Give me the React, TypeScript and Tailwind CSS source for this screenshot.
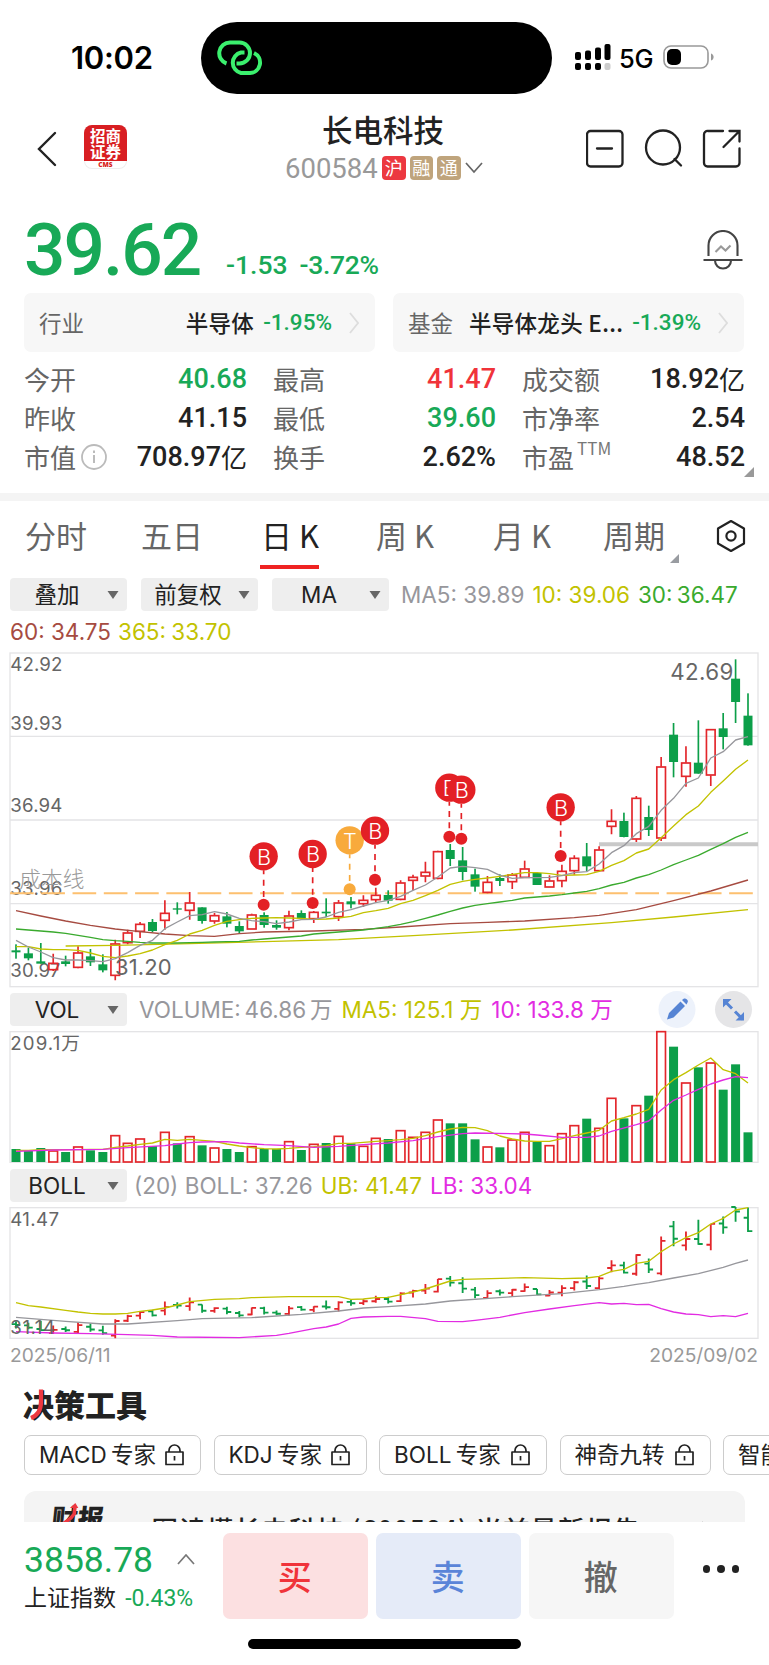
import React from 'react';
import { clsx } from 'clsx';

const UP = '#e3262b';
const DOWN = '#0c9f49';

// Plot units shared by the three charts: 3 units per CSS pixel
const STEP = 37.22;
const FIRST_X = 48;
const xAt = (i: number) => FIRST_X + i * STEP;

type Candle = [top: number, bottom: number, high: number, low: number, up: 0 | 1, volTop: number];

const candles: Candle[] = [
  [930, 936, 912, 955, 0, 492],
  [939, 954, 922, 960, 0, 498],
  [963, 970, 908, 970, 0, 489],
  [968, 989, 940, 992, 1, 498],
  [963, 971, 946, 978, 0, 501],
  [937, 982, 918, 984, 1, 486],
  [948, 966, 926, 977, 0, 496],
  [972, 990, 942, 996, 0, 501],
  [910, 1006, 898, 1020, 1, 452],
  [877, 908, 868, 912, 1, 475],
  [851, 874, 845, 893, 1, 462],
  [845, 872, 836, 876, 0, 483],
  [818, 841, 780, 868, 1, 442],
  [804, 808, 786, 822, 0, 475],
  [787, 811, 755, 838, 1, 455],
  [801, 842, 801, 850, 0, 481],
  [825, 843, 818, 850, 1, 489],
  [828, 850, 815, 861, 0, 492],
  [857, 873, 843, 880, 0, 501],
  [823, 867, 820, 867, 1, 485],
  [824, 854, 816, 862, 0, 492],
  [854, 862, 840, 868, 0, 492],
  [826, 863, 811, 870, 1, 470],
  [818, 834, 810, 838, 0, 495],
  [815, 836, 812, 848, 1, 478],
  [814, 819, 774, 830, 0, 474],
  [787, 830, 779, 842, 1, 454],
  [783, 792, 770, 804, 0, 475],
  [779, 791, 765, 800, 1, 484],
  [764, 779, 742, 785, 1, 460],
  [764, 781, 750, 790, 0, 462],
  [727, 778, 720, 780, 1, 437],
  [710, 721, 703, 750, 1, 457],
  [695, 708, 664, 726, 1, 442],
  [633, 715, 631, 717, 1, 405],
  [629, 656, 611, 677, 0, 415],
  [660, 695, 620, 720, 0, 415],
  [702, 739, 685, 754, 0, 463],
  [725, 757, 707, 759, 1, 486],
  [713, 722, 702, 737, 0, 487],
  [703, 725, 698, 746, 1, 465],
  [685, 712, 661, 712, 1, 442],
  [698, 734, 698, 734, 0, 471],
  [721, 741, 705, 741, 1, 482],
  [692, 722, 673, 741, 1, 446],
  [653, 692, 645, 703, 1, 422],
  [648, 678, 608, 693, 0, 401],
  [628, 692, 618, 694, 1, 430],
  [542, 559, 507, 582, 1, 340],
  [542, 590, 517, 591, 0, 400],
  [473, 597, 467, 605, 1, 362],
  [530, 569, 496, 587, 0, 332],
  [379, 594, 350, 602, 1, 140],
  [283, 365, 248, 411, 0, 185],
  [367, 409, 318, 439, 1, 294],
  [367, 400, 240, 400, 0, 247],
  [267, 405, 267, 437, 1, 234],
  [264, 290, 218, 327, 0, 314],
  [115, 185, 57, 248, 0, 238],
  [226, 315, 159, 316, 0, 442],
];

const ma5 = [
  900, 920, 935, 952, 959, 959, 961, 964, 955, 937, 915, 900, 865, 845, 826, 823, 814, 821, 834, 841,
  844, 850, 845, 838, 837, 830, 816, 808, 797, 787, 780, 768, 750, 734, 710, 683, 678, 682, 687, 705,
  714, 712, 712, 711, 706, 697, 694, 671, 637, 616, 580, 558, 510, 474, 429, 413, 353, 334, 299, 289,
];
const ma10 = [
  919, 919, 926, 928, 928, 930, 938, 948, 952, 947, 940, 929, 913, 900, 881, 870, 855, 843, 838, 834,
  833, 832, 833, 834, 837, 836, 833, 828, 817, 811, 804, 790, 780, 766, 750, 732, 723, 717, 713, 708,
  702, 697, 697, 700, 705, 704, 703, 693, 675, 661, 638, 626, 592, 557, 523, 497, 456, 422, 387, 359,
];
const ma30 = [
  866, 869, 872, 875, 879, 885, 891, 898, 901, 903, 906, 908, 908, 908, 907, 906, 905, 904, 903, 899,
  896, 893, 890, 887, 881, 878, 875, 872, 869, 864, 859, 852, 844, 834, 824, 813, 803, 795, 790, 785,
  780, 773, 770, 767, 763, 758, 753, 745, 734, 726, 713, 703, 689, 673, 659, 645, 627, 610, 591, 576,
];

type Sparse = [index: number, y: number][];

const ma60: Sparse = [
  [0, 811], [2, 827], [4, 842], [6, 855], [8, 866], [10, 874], [12, 881], [14, 886], [16, 888], [18, 880],
  [20, 875], [24, 872], [28, 867], [31, 860], [35, 850], [38, 846], [41, 842], [45, 832], [47, 825], [50, 808],
  [53, 781], [56, 752], [59, 719],
];
const ma365: Sparse = [[4, 917], [8, 915], [14, 910], [20, 904], [26, 898], [32, 886], [40, 869], [48, 847], [53, 830], [59, 808]];

const volMa5 = [
  496, 496, 494, 494, 494, 494, 493, 493, 487, 483, 478, 474, 463, 466, 463, 466, 469, 477, 483, 488,
  491, 492, 490, 487, 485, 482, 475, 475, 472, 469, 467, 464, 460, 452, 441, 432, 427, 428, 437, 453,
  462, 468, 469, 469, 461, 452, 444, 436, 408, 398, 387, 373, 315, 284, 263, 240, 219, 254, 266, 294,
];
const volMa10: Sparse = [
  [0, 499], [3, 495], [7, 493], [9, 488], [12, 482], [13, 477], [14, 473], [15, 471], [17, 470], [18, 474],
  [20, 479], [22, 482], [24, 487], [26, 484], [28, 479], [30, 474], [32, 467], [34, 455], [36, 446], [37, 444],
  [41, 447], [42, 450], [44, 457], [46, 457], [47, 453], [48, 439], [50, 419], [51, 408], [52, 375], [53, 346],
  [54, 330], [55, 313], [56, 297], [57, 285], [58, 275], [59, 278],
];

const bollUpper: Sparse = [
  [0, 953], [1, 962], [2, 966], [4, 976], [5, 981], [6, 985], [7, 987], [8, 987], [9, 985], [10, 979],
  [11, 975], [12, 969], [13, 960], [14, 950], [16, 943], [18, 941], [19, 938], [22, 935], [26, 935], [27, 943],
  [28, 942], [29, 938], [30, 937], [32, 921], [33, 912], [34, 900], [35, 888], [36, 883], [41, 878], [44, 881],
  [46, 879], [47, 874], [48, 859], [49, 853], [50, 835], [51, 829], [52, 800], [53, 777], [54, 758], [55, 743],
  [56, 717], [57, 700], [58, 675], [59, 668],
];
const bollMid: Sparse = [
  [0, 997], [4, 1009], [7, 1017], [9, 1017], [13, 1007], [15, 1001], [19, 998], [23, 988], [26, 978], [28, 969],
  [30, 965], [33, 957], [35, 948], [40, 935], [44, 926], [47, 914], [49, 904], [50, 898], [51, 893], [53, 879],
  [55, 866], [57, 847], [58, 835], [59, 825],
];
const bollLower: Sparse = [
  [0, 1040], [3, 1044], [6, 1046], [9, 1049], [11, 1051], [13, 1056], [18, 1058], [21, 1051], [22, 1045], [24, 1031],
  [25, 1026], [26, 1017], [27, 1000], [28, 996], [30, 994], [31, 994], [33, 1001], [34, 1009], [36, 1010], [37, 1006],
  [39, 997], [41, 983], [43, 972], [45, 962], [47, 953], [48, 957], [49, 955], [50, 959], [51, 958], [52, 971],
  [53, 981], [54, 987], [55, 989], [56, 995], [57, 992], [58, 995], [59, 985],
];

const markers = [
  { x: 791, y: 648, dot: 793, label: 'B', color: '#e32025' },
  { x: 938, y: 641, dot: 788, label: 'B', color: '#e32025' },
  { x: 1049, y: 600, dot: 747, label: 'T', color: '#f8aa3c' },
  { x: 1125, y: 571, dot: 718, label: 'B', color: '#e32025' },
  { x: 1348, y: 442, dot: 589, label: 'B', color: '#e32025' },
  { x: 1384, y: 448, dot: 595, label: 'B', color: '#e32025' },
  { x: 1682, y: 501, dot: 647, label: 'B', color: '#e32025' },
];

const dense = (ys: number[]) => ys.map((y, i) => `${xAt(i)},${y}`).join(' ');
const sparse = (pts: Sparse) => pts.map(([i, y]) => `${xAt(i)},${y}`).join(' ');

function Line({ points, color }: { points: string; color: string }) {
  return <polyline points={points} fill="none" stroke={color} strokeWidth={4} strokeLinejoin="round" />;
}

function PriceChart() {
  return (
    <svg viewBox="27 35 2250 1008" className="ml-[9px] block h-[336px] w-[750px]">
      <g stroke="#e4e4e6" strokeWidth={4} fill="none">
        <rect x={30} y={38} width={2244} height={1001} />
        <path d="M30 288H2274M30 539H2274M30 790H2274" />
      </g>
      <g fill="#666" fontSize={56} className="font-['Inter']">
        <text x={31} y={93} textLength={156}>42.92</text>
        <text x={31} y={270} textLength={156}>39.93</text>
        <text x={31} y={516} textLength={156}>36.94</text>
        <text x={31} y={763} textLength={156}>33.96</text>
        <text x={31} y={1009} textLength={150}>30.97</text>
      </g>
      <text x={58} y={741} fontSize={65} fill="#999" className="font-['Noto_Sans_CJK_SC'] font-light">成本线</text>
      <path d="M30 759H2262" stroke="#fdc06f" strokeWidth={6} strokeDasharray="71 22.8" />
      <path d="M1797 612H2274" stroke="#c9c9c9" strokeWidth={12} />
      {candles.map(([top, bottom, high, low, up], i) => {
        const x = xAt(i);
        return up ? (
          <g key={i} stroke={UP} strokeWidth={5} fill="none">
            <path d={`M${x} ${high}V${top}M${x} ${bottom}V${low}`} />
            <rect x={x - 13} y={top + 1} width={26} height={bottom - top - 2} />
          </g>
        ) : (
          <g key={i} fill={DOWN}>
            <rect x={x - 2.5} y={high} width={5} height={low - high} />
            <rect x={x - 13.5} y={top} width={27} height={bottom - top} />
          </g>
        );
      })}
      <Line points={sparse(ma365)} color="#c2c200" />
      <Line points={sparse(ma60)} color="#a64b41" />
      <Line points={dense(ma30)} color="#3aaa2e" />
      <Line points={dense(ma10)} color="#c2c200" />
      <Line points={dense(ma5)} color="#97979c" />
      <g className="font-['Inter']" fill="#666">
        <text x={345} y={1003} fontSize={66} textLength={170}>31.20</text>
        <text x={2011} y={118} fontSize={67} textLength={189}>42.69</text>
      </g>
      {markers.map((m) => (
        <g key={m.x}>
          <path d={`M${m.x} ${m.y + 42}V${m.dot}`} stroke={m.color} strokeWidth={5} strokeDasharray="18 16" strokeDashoffset={6} />
          <circle cx={m.x} cy={m.y} r={42.5} fill={m.color} />
          <circle cx={m.x} cy={m.dot} r={18} fill={m.color} />
          <text x={m.x + 1} y={m.y + 25} fontSize={65} fill="#fff" textAnchor="middle" className="font-['Inter'] font-light">
            {m.label}
          </text>
        </g>
      ))}
    </svg>
  );
}

function VolumeChart() {
  return (
    <svg viewBox="27 135 2250 402" className="ml-[9px] block h-[134px] w-[750px]">
      <rect x={30} y={140} width={2244} height={392} fill="none" stroke="#e4e4e6" strokeWidth={4} />
      <text x={31} y={195} fontSize={56} fill="#666" textLength={209} className="font-['Inter','Noto_Sans_CJK_SC']">
        209.1万
      </text>
      {candles.map(([, , , , up, top], i) =>
        up ? (
          <rect key={i} x={xAt(i) - 13} y={top} width={26} height={531 - top} fill="#fff" stroke={UP} strokeWidth={5} />
        ) : (
          <rect key={i} x={xAt(i) - 13.5} y={top} width={27} height={531 - top} fill={DOWN} />
        )
      )}
      <Line points={dense(volMa5)} color="#c2c200" />
      <Line points={sparse(volMa10)} color="#e22ce2" />
    </svg>
  );
}

// Price plot -> BOLL plot
const bollY = (y: number) => Math.max(666, 613 + (y - 38) * 0.4531);

function BollChart() {
  return (
    <svg viewBox="27 663 2250 402" className="ml-[9px] block h-[134px] w-[750px]">
      <rect x={30} y={668} width={2244} height={392} fill="none" stroke="#e4e4e6" strokeWidth={4} />
      {candles.map(([top, bottom, high, low, up], i) => {
        const x = xAt(i);
        const open = bollY(up ? bottom : top);
        const close = bollY(up ? top : bottom);
        return (
          <path
            key={i}
            d={`M${x} ${bollY(high)}V${bollY(low) + 2}M${x - 13} ${open}H${x}M${x} ${close}H${x + 13}`}
            stroke={up ? UP : DOWN}
            strokeWidth={5.5}
          />
        );
      })}
      <Line points={sparse(bollUpper)} color="#c2c200" />
      <Line points={sparse(bollMid)} color="#97979c" />
      <Line points={sparse(bollLower)} color="#e22ce2" />
      <g fill="#666" fontSize={56} className="font-['Inter']">
        <text x={31} y={723} textLength={146}>41.47</text>
        <text x={31} y={1047} textLength={134}>31.14</text>
      </g>
    </svg>
  );
}

function StatusBar() {
  return (
    <div className="flex h-[94px] pt-[22px]">
      <div className="w-[201px] pt-[15px] pl-[71px] font-['Inter'] text-[31px] leading-[42px] font-semibold">
        <span className="tracking-[-0.3px]">10:02</span>
      </div>
      <div className="h-[72px] w-[351px] rounded-full bg-black pt-[17px] pl-[16px]">
        <svg width="46" height="38" viewBox="0 0 46 38" fill="none" stroke="#3bf06e" strokeWidth="4">
          <path d="M9.5 24.5A10.8 10.8 0 0 1 13 3.500H22.500A10.500 10.500 0 0 1 22.500 24.500H19.500" />
          <path d="M27.500 13.500H24A10.500 10.500 0 0 0 24 34H33A10.500 10.500 0 0 0 37 14" />
        </svg>
      </div>
      <div className="flex items-start pt-[21px] pl-[23px]">
        <svg width="36" height="28" viewBox="0 0 36 28">
          <rect x="0" y="9" width="6" height="8" rx="2" />
          <rect x="10" y="7.500" width="6" height="9.500" rx="2" />
          <rect x="20" y="4.500" width="6" height="12.500" rx="2" />
          <rect x="29.500" y="1" width="6" height="16" rx="2" />
          <rect x="0" y="20" width="6" height="7" rx="2" />
          <rect x="10" y="20" width="6" height="7" rx="2" />
          <rect x="20" y="20" width="6" height="7" rx="2" />
          <rect x="29.500" y="20" width="6" height="7" rx="2" fill="#ccc" />
        </svg>
        <span className="ml-2 w-[44px] font-['Inter'] text-[25.5px] leading-[32px] font-medium tracking-[-0.3px]">5G</span>
        <svg width="52" height="26" viewBox="0 0 52 26" className="mt-[1px]">
          <rect x="1" y="2" width="44" height="22" rx="7" fill="none" stroke="#999" strokeWidth="1.600" />
          <rect x="4" y="5" width="14" height="16" rx="5" />
          <path d="M48 9.500C51.500 10.500 51.500 15.500 48 16.500Z" fill="#999" />
        </svg>
      </div>
    </div>
  );
}

const badges = [
  { text: '沪', bg: 'bg-[#ec3840]' },
  { text: '融', bg: 'bg-[#bfa47c]' },
  { text: '通', bg: 'bg-[#bfa47c]' },
];

function Header() {
  return (
    <div className="flex h-[106px]">
      <svg width="20" height="36" viewBox="0 0 20 36" fill="none" stroke="#222" strokeWidth="2.400" className="mt-[37px] ml-[37px]" strokeLinecap="round">
        <path d="M18 2L2 18L18 34" />
      </svg>
      <div className="mt-[31px] ml-[27px] h-[44px] w-[43px] overflow-hidden rounded-[8px] bg-white text-center shadow-[inset_0_0_0_1px_#eee]">
        <div className="h-[36px] bg-[#d81e22] pt-[2px] font-['Noto_Sans_CJK_SC'] text-[15.5px] leading-[16px] font-bold text-white">
          招商
          <br />
          证券
        </div>
        <div className="font-['Open_Sans'] text-[6.5px] leading-[7px] font-extrabold text-[#d81e22]">CMS</div>
      </div>
      <div className="w-[459px] pt-[16px] pl-[158px]">
        <h1 className="pl-[37px] font-['Noto_Sans_CJK_SC'] text-[30.5px] leading-[38px] font-medium text-[#222]">长电科技</h1>
        <div className="mt-[2px] flex h-[36px] items-center">
          <span className="w-[97px] pt-[2px] font-['Roboto'] text-[27.5px] text-[#999]">600584</span>
          {badges.map((b) => (
            <span
              key={b.text}
              className={clsx(
                "mr-[4px] h-[24px] w-[23.5px] rounded-[4px] text-center font-['Noto_Sans_CJK_SC'] text-[18px] leading-[23px] text-white",
                b.bg
              )}
            >
              {b.text}
            </span>
          ))}
          <svg width="18" height="12" viewBox="0 0 18 12" fill="none" stroke="#666" strokeWidth="1.700">
            <path d="M1 1L9 10L17 1" />
          </svg>
        </div>
      </div>
      <svg width="160" height="42" viewBox="0 0 160 42" fill="none" stroke="#222" strokeWidth="2.300" className="mt-[34px]" strokeLinecap="round">
        <rect x="1" y="3" width="35.500" height="35.500" rx="3.500" />
        <path d="M11 20.500H26" />
        <circle cx="77" cy="19.500" r="17" />
        <path d="M88.500 31L95 37.500" />
        <path d="M137 3H122A3.500 3.500 0 0 0 118 6.500V35A3.500 3.500 0 0 0 121.500 38.500H150A3.500 3.500 0 0 0 153.500 35V20.500M143.500 3H153.500V13.500M153.500 3L137.500 19" />
      </svg>
    </div>
  );
}

function Quote() {
  return (
    <div className="flex h-[93px] font-['Roboto'] font-medium text-[#18a957]">
      <div className="w-[226px] pl-[24px] text-[73px] leading-[100px] tracking-[-2px]">39.62</div>
      <div className="flex gap-[12px] pt-[41px] text-[26.5px] leading-[48px]">
        <span>-1.53</span>
        <span className="tracking-[-0.3px]">-3.72%</span>
      </div>
      <svg width="40" height="42" viewBox="0 0 40 42" fill="none" stroke="#444" strokeWidth="2.100" className="mt-[30px] mr-[26px] ml-auto">
        <path d="M5.500 26V15.500A14.500 14.500 0 0 1 34.500 15.500V26M0.500 30H39.500M12 30.500A8 8 0 0 0 28 30.500" />
        <path d="M12.500 22L18 16.500L22.500 20.500L27.500 15.500" stroke="#999" />
      </svg>
    </div>
  );
}

const related = [
  { label: '行业', name: '半导体', change: '-1.95%' },
  { label: '基金', name: '半导体龙头 E...', change: '-1.39%' },
];

function Related() {
  return (
    <div className="mx-6 flex h-[59px] gap-[18px]">
      {related.map((r) => (
        <div key={r.label} className="flex w-[351px] items-center rounded-[7px] bg-[#f7f7f7] pr-4 pl-[15px] font-['Noto_Sans_CJK_SC'] text-[22.5px]">
          <span className="text-[#666]">{r.label}</span>
          <span className="ml-auto font-medium tracking-[0.3px] whitespace-nowrap text-[#222]">{r.name}</span>
          <span className="ml-[9px] font-['Roboto'] text-[22.5px] font-medium text-[#18a957]">{r.change}</span>
          <svg width="10" height="22" viewBox="0 0 10 22" fill="none" stroke="#ddd" strokeWidth="1.800" className="ml-[17px]">
            <path d="M1 1L9 11L1 21" />
          </svg>
        </div>
      ))}
    </div>
  );
}

const stats = [
  { label: '今开', value: '40.68', color: 'text-[#18a957]' },
  { label: '最高', value: '41.47', color: 'text-[#f0333a]' },
  { label: '成交额', value: '18.92', unit: '亿' },
  { label: '昨收', value: '41.15' },
  { label: '最低', value: '39.60', color: 'text-[#18a957]' },
  { label: '市净率', value: '2.54' },
  { label: '市值', value: '708.97', unit: '亿', info: true },
  { label: '换手', value: '2.62%' },
  { label: '市盈', value: '48.52', sup: 'TTM' },
];

function Stats() {
  return (
    <div className="relative mx-6 grid h-[141px] grid-cols-[223px_223px_223px] gap-x-[26px] pt-[7px] [grid-auto-rows:39px]">
      {stats.map((s) => (
        <div key={s.label} className="flex items-center font-['Noto_Sans_CJK_SC'] text-[26px] leading-[39px]">
          <span className="text-[#666]">{s.label}</span>
          {s.sup && <span className="ml-[3px] self-start text-[17px] leading-[22px] text-[#777]">{s.sup}</span>}
          {s.info && (
            <svg width="26" height="26" viewBox="0 0 26 26" fill="none" stroke="#bbb" strokeWidth="1.800" className="ml-[5px]">
              <circle cx="13" cy="13" r="12" />
              <path d="M13 11V19M13 6.500V9" strokeWidth="2" />
            </svg>
          )}
          <span className={clsx("ml-auto pt-[2px] font-['Roboto'] text-[27px] font-medium", s.color ?? 'text-[#222]')}>{s.value}</span>
          {s.unit && <span className="text-[#222]">{s.unit}</span>}
        </div>
      ))}
      <div className="absolute right-[-9px] bottom-[16px] h-[10px] w-[10px] bg-[#999] [clip-path:polygon(100%_0,100%_100%,0_100%)]" />
    </div>
  );
}

const tabs = [
  { name: '分时', width: 'w-[116px]' },
  { name: '五日', width: 'w-[119px]' },
  { name: '日 K', width: 'w-[116px]', active: true },
  { name: '周 K', width: 'w-[117px]' },
  { name: '月 K', width: 'w-[110px]' },
  { name: '周期', width: 'w-[113px]', more: true },
];

function PeriodTabs() {
  return (
    <div className="flex h-[77px] pl-[25px]">
      {tabs.map((t) => (
        <div key={t.name} className={clsx("relative font-['Noto_Sans_CJK_SC'] text-[31px] leading-[68px] whitespace-nowrap", t.width)}>
          <span className={t.active ? 'pl-[1px] text-[#222]' : 'text-[#666]'}>{t.name}</span>
          {t.active && <div className="absolute top-[64px] left-0 h-[4px] w-[59px] bg-[#ef2322]" />}
          {t.more && <div className="absolute top-[53px] left-[67px] h-[9px] w-[9px] bg-[#999ca1] [clip-path:polygon(100%_0,100%_100%,0_100%)]" />}
        </div>
      ))}
      <svg width="30" height="34" viewBox="0 0 30 34" fill="none" stroke="#222" strokeWidth="2.200" className="mt-[18px]">
        <path d="M15 2L28 9.500V24.500L15 32L2 24.500V9.500Z" strokeLinejoin="round" />
        <circle cx="15" cy="17" r="4.600" />
      </svg>
    </div>
  );
}

function Select({ label }: { label: string }) {
  return (
    <div className="flex h-[33px] w-[117px] shrink-0 items-center rounded-[4px] bg-[#eee] pr-[8px] font-['Inter','Noto_Sans_CJK_SC'] text-[22.5px] text-[#222]">
      <span className="flex-1 pr-[3px] text-center">{label}</span>
      <svg width="12" height="8" viewBox="0 0 12 8" fill="#666">
        <path d="M0.500 0H11.500L6 8Z" />
      </svg>
    </div>
  );
}

function Legend({ text, className }: { text: string; className: string }) {
  return <span className={clsx("font-['Inter','Noto_Sans_CJK_SC'] text-[22.5px] leading-[33px] whitespace-nowrap", className)}>{text}</span>;
}

function LockIcon() {
  return (
    <svg width="19" height="22" viewBox="0 0 19 22" fill="none" stroke="#222" strokeWidth="1.700">
      <path d="M1 8H18V20.500H1ZM4 8V6.500A5.500 5.500 0 0 1 15 6.500V8M9.500 12V16.500" strokeLinejoin="round" />
    </svg>
  );
}

const tools = [
  { name: 'MACD 专家', width: 'w-[177px]' },
  { name: 'KDJ 专家', width: 'w-[153px]' },
  { name: 'BOLL 专家', width: 'w-[168px]' },
  { name: '神奇九转', width: 'w-[151px]' },
  { name: '智能盯盘', width: 'w-[151px]' },
];

function Tools() {
  return (
    <div className="h-[151px] overflow-hidden pt-[14px] font-['Noto_Sans_CJK_SC']">
      <h2 className="relative ml-[23px] text-[31px] leading-[38px] font-black text-[#222]">
        决策工具
        <svg width="31" height="38" viewBox="0 0 31 38" fill="none" stroke="#ec3840" strokeWidth="4.200" className="absolute top-0 left-0">
          <path d="M18 4.500V17C18 25 15.500 30 8 33" />
        </svg>
      </h2>
      <div className="mt-[12px] ml-6 flex gap-[12.500px]">
        {tools.map((t) => (
          <div
            key={t.name}
            className={clsx(
              "flex h-[39.500px] shrink-0 items-center justify-between rounded-[7px] border border-[#ccc] pr-[16px] pl-[14px] font-['Inter','Noto_Sans_CJK_SC'] text-[22.5px] whitespace-nowrap text-[#222] [word-spacing:-2px]",
              t.width
            )}
          >
            {t.name}
            <LockIcon />
          </div>
        ))}
      </div>
      <div className="mx-6 mt-[16px] flex h-[80px] rounded-[12px] bg-[#f4f4f4] pl-[26px]">
        <span className="relative mt-[8px] -skew-x-6 text-[26px] leading-[36px] font-black text-[#222]">
          财报
          <svg width="30" height="36" viewBox="0 0 30 36" fill="none" stroke="#ec3840" strokeWidth="3.600" className="absolute top-0 left-0">
            <path d="M22 9V15C19 20 13 25 4 28" />
            <path d="M17 9L22 4L25.500 9Z" fill="#ec3840" stroke="none" />
          </svg>
        </span>
        <span className="ml-[22px] pt-[20px] text-[26.500px] leading-[36px] font-medium tracking-[1px] whitespace-nowrap text-[#222]">
          一图读懂长电科技 (600584) 当前最新报告
        </span>
        <svg width="10" height="20" viewBox="0 0 10 20" fill="none" stroke="#999" strokeWidth="1.600" className="mt-[30px] mr-[34px] ml-auto">
          <path d="M1 1L9 10L1 19" />
        </svg>
      </div>
    </div>
  );
}

const actions = [
  { name: '买', style: 'bg-[#fce0e1] text-[#f0333a]' },
  { name: '卖', style: 'bg-[#e5ebf8] text-[#5a84d8]' },
  { name: '撤', style: 'bg-[#f6f6f6] text-[#666]' },
];

function BottomBar() {
  return (
    <div className="h-[143px] bg-white pt-[11px]">
      <div className="flex">
        <div className="w-[223px] pt-[5px] pl-6">
          <div className="flex items-center font-['Roboto'] text-[35.500px] leading-[45px] text-[#18a957]">
            <span className="w-[153px]">3858.78</span>
            <svg width="18" height="11" viewBox="0 0 18 11" fill="none" stroke="#777" strokeWidth="1.700" className="-mt-[3px]">
              <path d="M1 10L9 1L17 10" />
            </svg>
          </div>
          <div className="-mt-[1px] font-['Noto_Sans_CJK_SC'] text-[23px] leading-[28px] whitespace-nowrap text-[#222]">
            上证指数 <span className="ml-[4px] font-['Roboto'] text-[23px] text-[#18a957]">-0.43%</span>
          </div>
        </div>
        <div className="flex gap-[8.500px]">
          {actions.map((a) => (
            <button key={a.name} className={clsx("h-[86px] w-[144.500px] rounded-[7px] pr-[1px] pb-[2px] font-['Noto_Sans_CJK_SC'] text-[34px] font-medium", a.style)}>
              {a.name}
            </button>
          ))}
        </div>
        <div className="mt-[32px] ml-[29px] flex h-[8px] gap-[7px]">
          <i className="h-[7.500px] w-[7.500px] rounded-full bg-[#222]" />
          <i className="h-[7.500px] w-[7.500px] rounded-full bg-[#222]" />
          <i className="h-[7.500px] w-[7.500px] rounded-full bg-[#222]" />
        </div>
      </div>
      <div className="mt-[20px] ml-[248px] h-[10px] w-[273px] rounded-full bg-black" />
    </div>
  );
}

export default function App() {
  return (
    <div className="h-[1665px] w-[769px] overflow-hidden bg-white">
      <StatusBar />
      <Header />
      <Quote />
      <Related />
      <Stats />
      <div className="h-[8px] bg-[#f4f4f4]" />
      <PeriodTabs />

      <div className="flex h-[34px] pl-[10px]">
        <div className="flex gap-[14px]">
          <Select label="叠加" />
          <Select label="前复权" />
          <Select label="MA" />
        </div>
        <div className="ml-[12px] flex gap-[8px]">
          <Legend text="MA5: 39.89" className="text-[#97979c]" />
          <Legend text="10: 39.06" className="text-[#c2c200]" />
          <Legend text="30: 36.47" className="text-[#3aaa2e] [word-spacing:-2px]" />
        </div>
      </div>
      <div className="flex h-[40px] gap-[7px] pt-[3px] pl-[10px]">
        <Legend text="60: 34.75" className="text-[#a64b41]" />
        <Legend text="365: 33.70" className="text-[#c2c200] [word-spacing:-1px]" />
      </div>
      <PriceChart />

      <div className="flex h-[42px] pt-[5px] pl-[10px]">
        <Select label="VOL" />
        <div className="ml-[12px] flex w-[519px] gap-[9px]">
          <Legend text="VOLUME: 46.86 万" className="text-[#97979c] [word-spacing:-2.5px]" />
          <Legend text="MA5: 125.1 万" className="text-[#c2c200]" />
          <Legend text="10: 133.8 万" className="text-[#e22ce2]" />
        </div>
        <svg width="96" height="38" viewBox="0 0 96 38" className="-mt-[2px]">
          <circle cx="19" cy="18.500" r="18.500" fill="#edf2fb" />
          <path d="M9 28.500L11 22L22.500 10.500L27 15L15.500 26.500ZM24 9L26 7.500Q27.500 7 29 8.500T29.500 11.500L28.500 13.500Z" fill="#5684d4" />
          <circle cx="75.500" cy="18.500" r="18.500" fill="#e5e5e7" />
          <path d="M66 9.500L74 17.500M77 20.500L85 28.500" stroke="#5684d4" strokeWidth="3" />
          <path d="M65 8H73.500L65 16.500ZM86 29.500H77.500L86 21Z" fill="#5684d4" />
        </svg>
      </div>
      <VolumeChart />

      <div className="flex h-[42px] pt-[5px] pl-[10px]">
        <Select label="BOLL" />
        <div className="ml-[7px] flex gap-[8px]">
          <Legend text="(20) BOLL: 37.26" className="text-[#97979c]" />
          <Legend text="UB: 41.47" className="text-[#c2c200]" />
          <Legend text="LB: 33.04" className="text-[#e22ce2]" />
        </div>
      </div>
      <BollChart />
      <div className="flex h-[31px] justify-between pr-[11px] pl-[10px] font-['Inter'] text-[19.200px] leading-[30px] text-[#999]">
        <span>2025/06/11</span>
        <span>2025/09/02</span>
      </div>

      <Tools />
      <BottomBar />
    </div>
  );
}
